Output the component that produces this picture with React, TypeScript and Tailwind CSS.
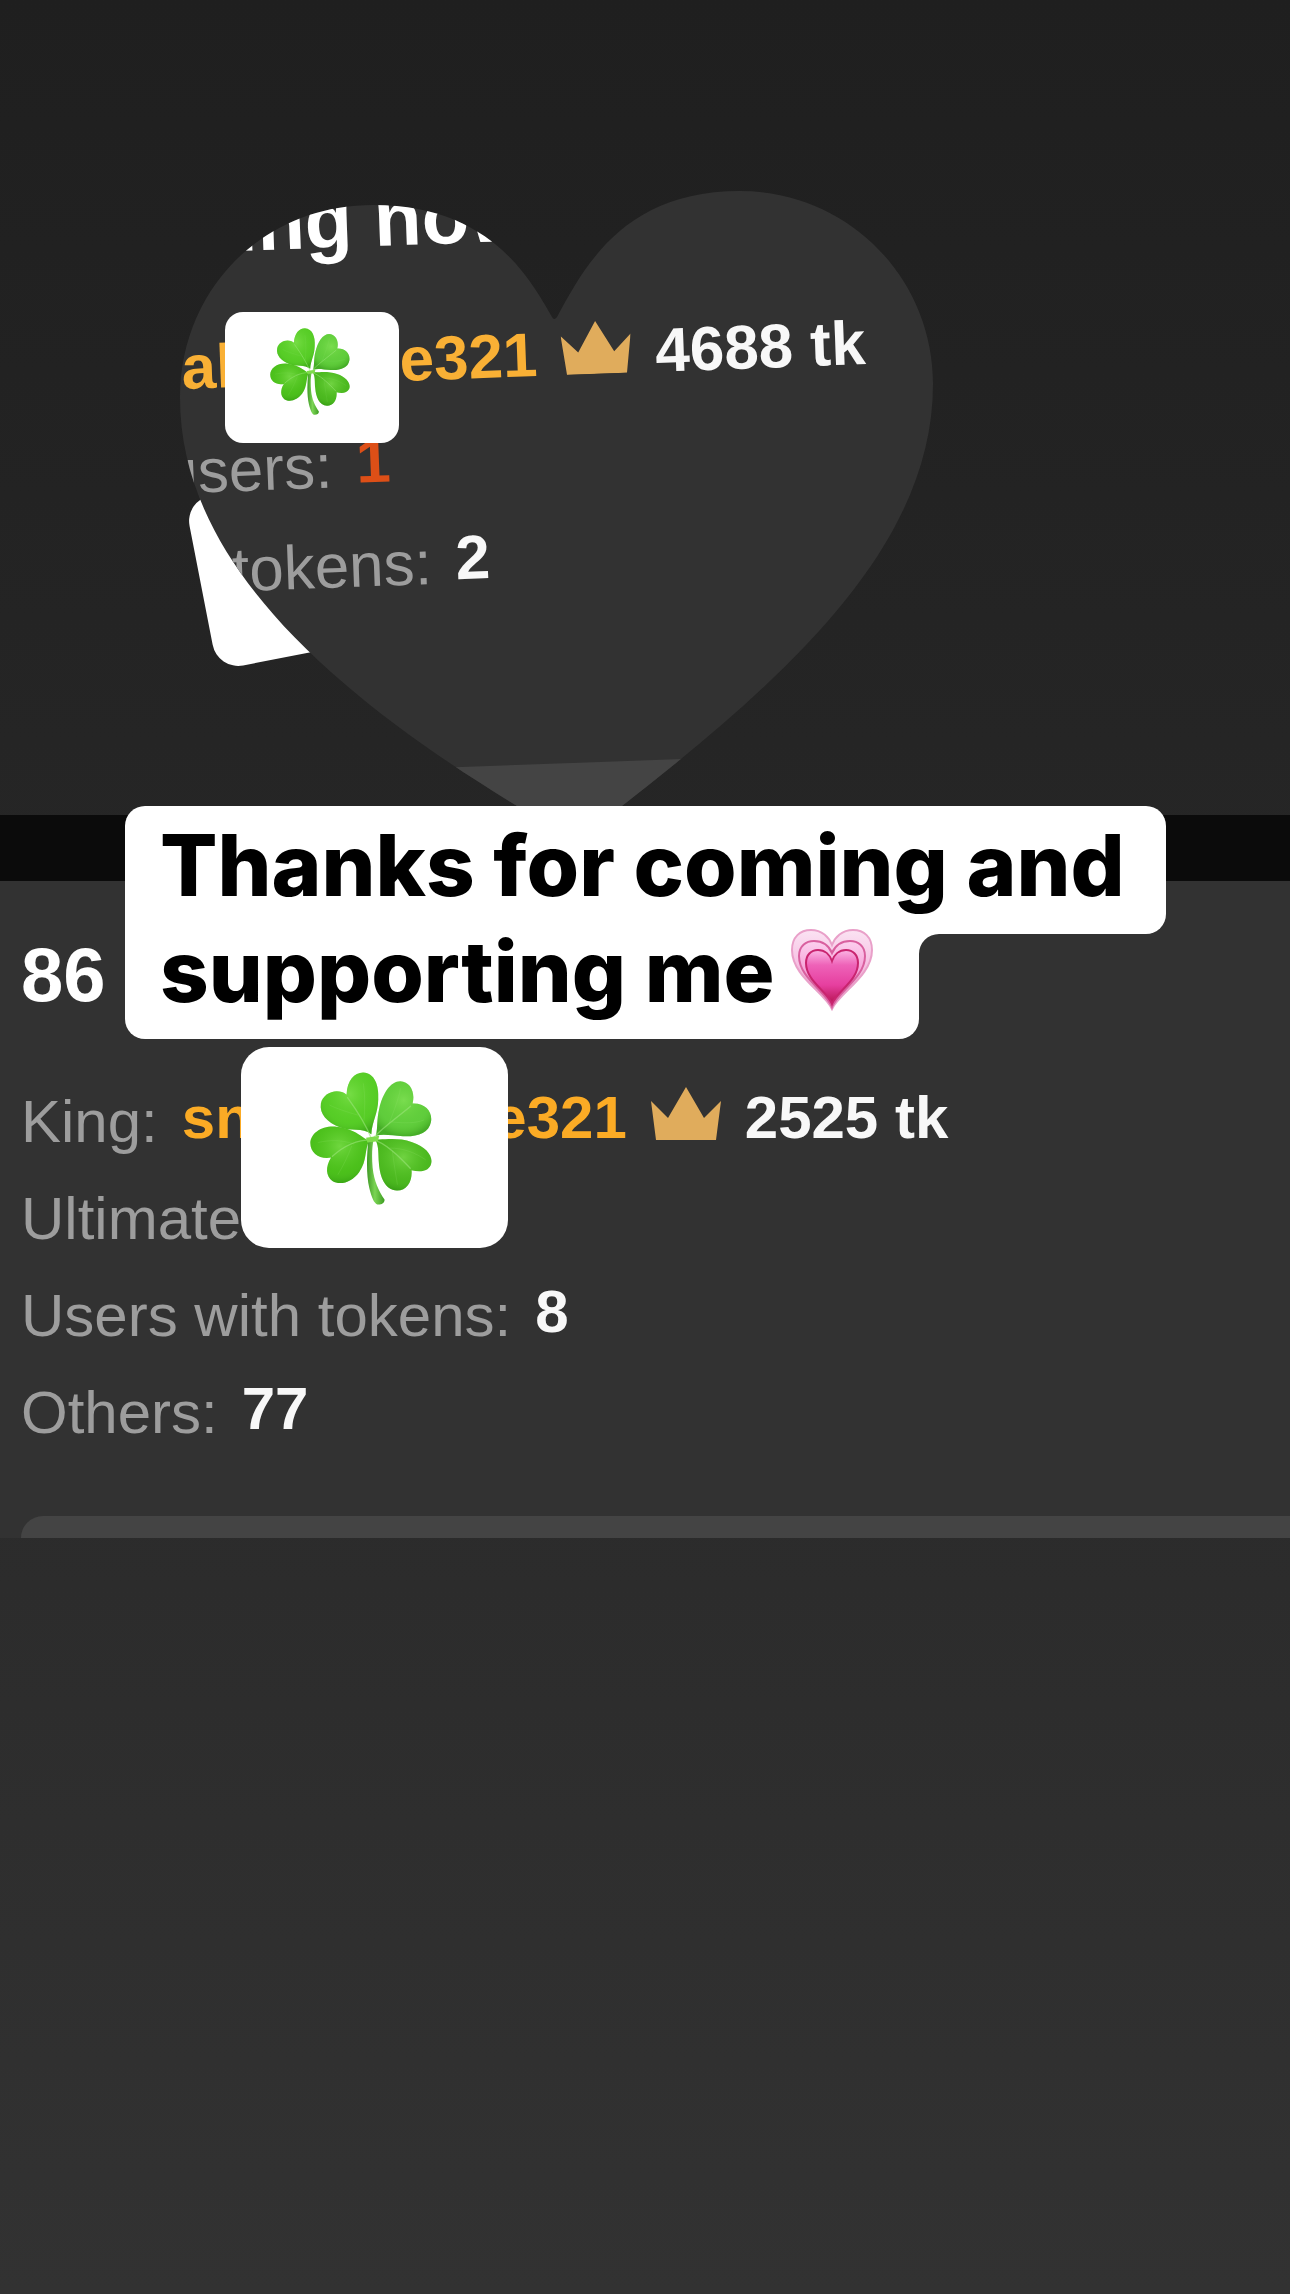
import React from "react";

function Clover({ className }: { className: string }) {
  const lobes = [
    "M426 283C400 262 362 275 330 262C292 247 268 222 273 190C279 158 322 141 351 163C352 120 376 95 402 96C436 98 450 135 447 178C446 222 428 245 426 283Z",
    "M440 288C446 262 442 238 450 205C460 160 484 122 514 122C544 123 560 155 551 190C590 188 612 215 607 245C601 279 566 291 522 289C490 288 462 281 440 288Z",
    "M420 302C398 296 384 268 320 260C275 256 242 280 241 310C241 343 271 360 304 354C286 383 288 410 308 425C333 440 368 427 389 398C414 363 405 330 420 302Z",
    "M438 298C456 303 500 290 550 307C596 322 616 353 606 377C596 398 570 398 548 392C551 425 535 454 504 454C467 452 452 412 449 372C446 342 450 322 438 298Z",
  ];
  const fills = ["#55cc25", "#60cc3f", "#48bd18", "#48b41d"];
  return (
    <svg viewBox="240 95 370 402" role="img" aria-label="Four leaf clover" className={className}>
      <defs>
        <radialGradient id="leafLight" cx="50%" cy="35%" r="65%">
          <stop offset="0%" stopColor="#8be85a" stopOpacity="0.6" />
          <stop offset="70%" stopColor="#5fd02c" stopOpacity="0.15" />
          <stop offset="100%" stopColor="#2b8f10" stopOpacity="0.5" />
        </radialGradient>
        <linearGradient id="stem" x1="0" x2="1" y1="0" y2="0">
          <stop offset="0%" stopColor="#3f9a25" />
          <stop offset="45%" stopColor="#7bd455" />
          <stop offset="100%" stopColor="#3c9c20" />
        </linearGradient>
      </defs>
      {lobes.map((d, i) => (
        <g key={d}>
          <path d={d} fill={fills[i]} />
          <path d={d} fill="url(#leafLight)" />
        </g>
      ))}
      <path d="M417 300C412 350 410 405 420 447C427 475 434 492 444 496C456 498 467 491 466 481C448 455 434 425 430 385C427 350 428 322 433 300Z" fill="url(#stem)" />
      <g fill="none" stroke="#9be57a" strokeLinecap="round" strokeOpacity="0.6">
        <path d="M426 296C412 260 385 215 354 172" strokeWidth="4" />
        <path d="M428 298C460 262 505 232 545 198" strokeWidth="4" />
        <path d="M426 300C375 300 335 325 308 350" strokeWidth="4" />
        <path d="M428 298C470 310 510 350 544 386" strokeWidth="4" />
        <path d="M404 240C406 205 408 170 402 130M385 225C350 215 320 205 300 195M480 250C495 210 510 175 514 145M490 246C530 250 560 250 585 240M372 312C335 300 300 300 265 308M366 320C355 350 340 380 325 405M482 325C525 325 560 340 590 360M490 335C495 375 500 405 505 435" strokeWidth="2" strokeOpacity="0.25" />
      </g>
      <path d="M410 294L450 288L446 304L414 308Z" fill="#7fdc4c" />
    </svg>
  );
}

function Crown() {
  return (
    <svg viewBox="0 0 70 53" role="img" aria-label="Crown" className="mt-[18px] h-[53px] w-[70px] shrink-0">
      <path d="M0 14L17 31L35 0L53 31L70 14L65 53H5Z" fill="#e0ac5c" />
    </svg>
  );
}

function GrowingHeart() {
  return (
    <svg viewBox="0 0 82 82" role="img" aria-label="Growing heart" className="h-[82px] w-[82px] shrink-0">
      <defs>
        <linearGradient id="outer" x1="0" x2="0" y1="0" y2="1">
          <stop offset="0%" stopColor="#fbe3f3" />
          <stop offset="45%" stopColor="#f6bfe2" />
          <stop offset="100%" stopColor="#e48fbd" />
        </linearGradient>
        <linearGradient id="middle" x1="0" x2="0" y1="0" y2="1">
          <stop offset="0%" stopColor="#fcd0ee" />
          <stop offset="50%" stopColor="#f59dd6" />
          <stop offset="100%" stopColor="#d2508f" />
        </linearGradient>
        <linearGradient id="inner" x1="0" x2="0" y1="0" y2="1">
          <stop offset="0%" stopColor="#fbb5e4" />
          <stop offset="28%" stopColor="#ee62b8" />
          <stop offset="65%" stopColor="#e63f9f" />
          <stop offset="100%" stopColor="#b51350" />
        </linearGradient>
      </defs>
      <path d="M41 80C33 63 1 47 1 21C1 8 9 1 20 1C31 1 38 8 41 16C44 8 51 1 62 1C73 1 81 8 81 21C81 47 49 63 41 80Z" fill="url(#outer)" stroke="#e9a0c9" strokeWidth="2" />
      <path d="M41 78C35 62 8 49 8 27C8 17 15 12 23 12C32 12 38 17 41 24C44 17 50 12 59 12C67 12 74 17 74 27C74 49 47 62 41 78Z" fill="url(#middle)" stroke="#d9609f" strokeWidth="2" />
      <path d="M41 75C36 62 15 52 15 34C15 26 20 21 27 21C34 21 39 26 41 32C43 26 48 21 55 21C62 21 67 26 67 34C67 52 46 62 41 75Z" fill="url(#inner)" stroke="#c9246f" strokeWidth="2" />
    </svg>
  );
}

function Stat({ label, children }: { label: string; children?: React.ReactNode }) {
  return (
    <div className="flex items-start gap-6">
      <dt className="text-[#9d9d9d]">{label}</dt>
      <dd className="-my-1 flex items-start font-bold text-[#f8f8f8]">{children}</dd>
    </div>
  );
}

function CloverSticker({ className, clover }: { className: string; clover: string }) {
  return (
    <div className={"absolute flex justify-center bg-white " + className}>
      <Clover className={clover} />
    </div>
  );
}

function HeartCutout() {
  return (
    <section
      aria-label="Earlier viewers"
      className="absolute top-[190px] left-[180px] h-[650px] w-[754px] bg-[#323232] [clip-path:path('M372_127C348_85_308_15_193_15C82_15_0_100_0_208C0_375_160_508_337_616L387_648L442_616C610_485_753_355_753_194C753_88_668_1_560_1C445_1_405_75_377_127Q374_131_372_127Z')]"
    >
      <div className="-mt-2 w-[900px] origin-[0_8px] rotate-[-2.1deg] whitespace-nowrap">
        <h2 className="ml-[54px] text-[78px] leading-[88px] font-bold text-white">ing now</h2>
        <dl className="mt-[52px] text-[62px] leading-[100px]">
          <div className="-my-1 -ml-[5px] flex items-start gap-6 font-bold text-[#f8f8f8]">
            <div className="flex w-[356px] justify-between text-[#f9b035]">
              <span>al</span>
              <span>le321</span>
            </div>
            <Crown />
            <span>4688 tk</span>
          </div>
          <div className="mt-2 -ml-[27px]">
            <Stat label="users:">
              <span className="text-[#dd4f17]">1</span>
            </Stat>
          </div>
          <div className="ml-[38px]">
            <Stat label="tokens:">2</Stat>
          </div>
        </dl>
        <div className="mt-[155px] h-24 bg-[#444444]" />
      </div>
    </section>
  );
}

function Caption() {
  return (
    <p className="absolute top-[806px] left-[125px] flex flex-col items-start font-['Inter',sans-serif] text-[85px] leading-[104px] font-extrabold whitespace-nowrap text-black">
      <span className="w-[1041px] rounded-[20px] rounded-bl-none bg-white px-[35px] pt-2 pb-4">Thanks for coming and</span>
      <span className="relative flex h-[105px] w-[794px] items-end gap-4 rounded-b-[20px] bg-white px-[35px] pb-7">
        <span className="leading-[78px]">supporting me</span>
        <GrowingHeart />
        <svg viewBox="0 0 20 20" aria-hidden="true" className="absolute top-0 left-full size-5">
          <path d="M0 0H20A20 20 0 0 0 0 20Z" fill="#fff" />
        </svg>
      </span>
    </p>
  );
}

export default function App() {
  return (
    <main className="relative flex min-h-screen flex-col overflow-hidden bg-linear-to-b from-[#1f1f1f] to-[#323232] font-['Liberation_Sans',Arial,sans-serif]">
      <div className="h-[815px]" />
      <div className="h-[66px] bg-[#0b0b0b]" />
      <section aria-label="Viewers" className="bg-[#323232] pt-[50px] pl-[21px] whitespace-nowrap">
        <h1 className="text-[76px] leading-[88px] font-bold text-white">86</h1>
        <dl className="mt-[54px] text-[60px] leading-[97px]">
          <Stat label="King:">
            <span className="flex gap-6">
              <span className="flex w-[445px] justify-between text-[#fbab25]">
                <span>sn</span>
                <span>e321</span>
              </span>
              <Crown />
              <span>2525 tk</span>
            </span>
          </Stat>
          <Stat label="Ultimate" />
          <Stat label="Users with tokens:">8</Stat>
          <Stat label="Others:">77</Stat>
        </dl>
        <div className="mt-[55px] h-[22px] rounded-tl-[22px] bg-[#444444]" />
      </section>

      <div className="absolute top-[477px] left-[199px] h-[173px] w-[230px] rotate-[-11deg] rounded-[26px] bg-white" />
      <HeartCutout />
      <CloverSticker className="top-[312px] left-[225px] h-[131px] w-[174px] rounded-[18px] pr-1" clover="mt-4 h-[87px] w-[80px]" />
      <CloverSticker className="top-[1047px] left-[241px] h-[201px] w-[267px] rounded-[28px] pr-2" clover="mt-[25px] h-[133px] w-[122px]" />
      <Caption />
    </main>
  );
}
